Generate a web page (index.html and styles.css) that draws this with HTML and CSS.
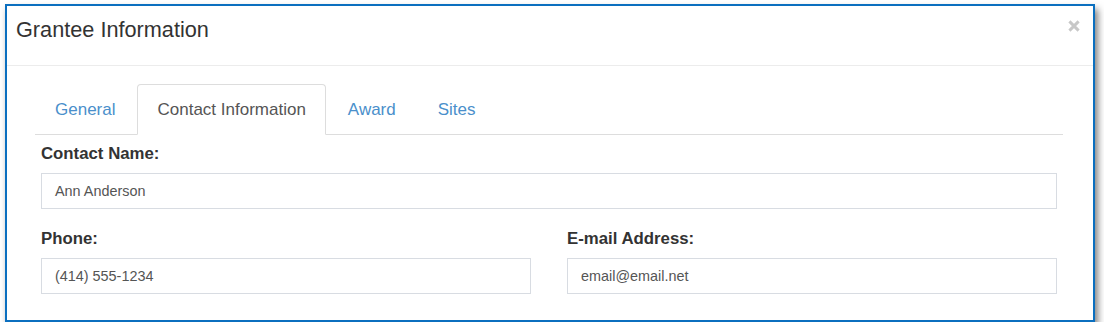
FILE: index.html
```html
<!DOCTYPE html>
<html lang="en">
<head>
<meta charset="utf-8">
<title>Grantee Information</title>
<link rel="stylesheet" href="styles.css">
</head>
<body>
<div class="modal">
  <div class="modal-header">
    <h4 class="modal-title">Grantee Information</h4>
    <button class="close" type="button" aria-label="Close">
      <svg width="12" height="12" viewBox="0 0 12 12"><path d="M1.4 1.4 L10.6 10.6 M10.6 1.4 L1.4 10.6" stroke="#c8c8c8" stroke-width="2.9" stroke-linecap="butt" fill="none"/></svg>
    </button>
  </div>
  <div class="modal-body">
    <ul class="nav-tabs">
      <li class="tab"><a href="#">General</a></li>
      <li class="tab active"><a href="#">Contact Information</a></li>
      <li class="tab"><a href="#">Award</a></li>
      <li class="tab"><a href="#">Sites</a></li>
    </ul>
    <div class="tab-content">
      <div class="form-group">
        <label class="label">Contact Name:</label>
        <div class="input">Ann Anderson</div>
      </div>
      <div class="form-row">
        <div class="form-group last">
          <label class="label">Phone:</label>
          <div class="input">(414) 555-1234</div>
        </div>
        <div class="form-group last">
          <label class="label">E-mail Address:</label>
          <div class="input">email@email.net</div>
        </div>
      </div>
    </div>
  </div>
</div>
</body>
</html>
```

FILE: styles.css
```css
html, body {
  margin: 0;
  padding: 0;
  background: #ffffff;
}

body {
  padding: 4px 0 0 5px;
  font-family: "Liberation Sans", Arial, sans-serif;
  color: #333333;
}

.modal {
  width: 1086px;
  border: 2px solid #0b6fbf;
  background: #ffffff;
  box-shadow: 3px 5px 7px rgba(0, 0, 0, 0.5);
}

.modal-header {
  display: flex;
  justify-content: space-between;
  align-items: flex-start;
  padding: 9px 13px 20px 9px;
  border-bottom: 1px solid #ececec;
}

.modal-title {
  margin: 0;
  font-size: 21.7px;
  line-height: 30px;
  font-weight: normal;
  color: #333333;
}

.close {
  margin-top: 5px;
  padding: 0;
  border: 0;
  background: transparent;
  width: 12px;
  height: 12px;
  display: block;
  cursor: pointer;
}

.close svg {
  display: block;
}

.modal-body {
  padding: 18px 30px 26px 28px;
}

.nav-tabs {
  display: flex;
  margin: 0;
  padding: 0;
  list-style: none;
  border-bottom: 1px solid #dddddd;
}

.tab {
  margin-right: 2px;
  margin-bottom: -1px;
}

.tab a {
  display: block;
  padding: 12px 19px;
  line-height: 25px;
  font-size: 17px;
  color: #4a8fcb;
  text-decoration: none;
  border: 1px solid transparent;
  border-radius: 4px 4px 0 0;
}

.tab.active a {
  color: #555555;
  background: #ffffff;
  border-color: #dddddd #dddddd transparent #dddddd;
}

.tab-content {
  padding: 7px 6px 0 6px;
}

.form-row {
  display: grid;
  grid-template-columns: 1fr 1fr;
  column-gap: 36px;
}

.form-group {
  margin-bottom: 18px;
}

.form-group.last {
  margin-bottom: 0;
}

.label {
  display: block;
  margin-bottom: 7px;
  font-size: 16.8px;
  line-height: 24px;
  font-weight: bold;
  color: #333333;
}

.input {
  height: 34px;
  line-height: 34px;
  padding: 0 13px;
  border: 1px solid #d8dce2;
  font-size: 14.4px;
  color: #555555;
  background: #ffffff;
}
```
